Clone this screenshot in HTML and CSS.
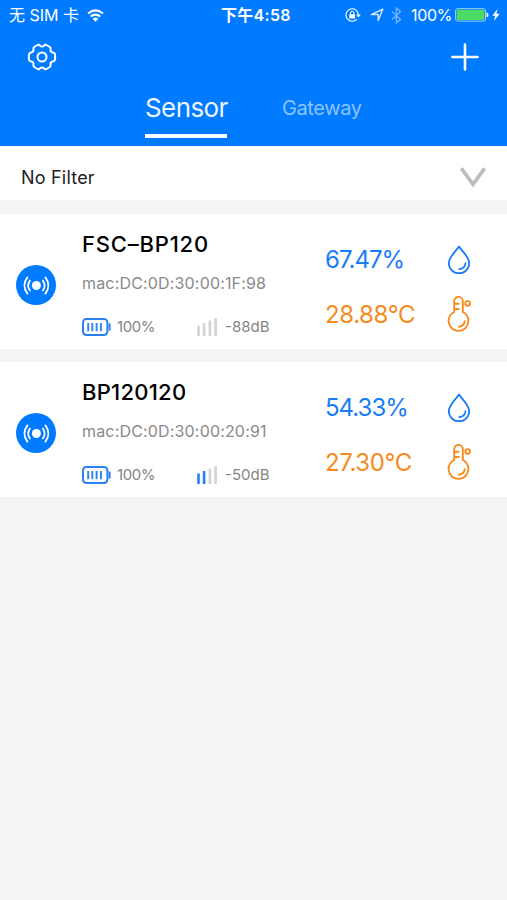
FILE: index.html
```html
<!DOCTYPE html>
<html lang="en">
<head>
<meta charset="utf-8">
<meta name="viewport" content="width=device-width, initial-scale=1">
<title>Sensor</title>
<link rel="stylesheet" href="styles.css">
</head>

<body>
<!-- shared icons -->
<svg class="sprite" width="0" height="0">
	<symbol id="beacon" viewBox="0 0 40 40">
		<circle cx="20" cy="20" r="20" fill="#007aff"/>
		<circle cx="20.4" cy="20.5" r="4.5" fill="#fff"/>
		<g fill="none" stroke="#fff" stroke-width="1.8" stroke-linecap="round">
			<path d="M13.9 15.4q-3.4 5.1 0 10.2M26.9 15.4q3.4 5.1 0 10.2"/>
			<path d="M11.4 12.4q-6 8.1 0 16.2M29.4 12.4q6 8.1 0 16.2"/>
		</g>
	</symbol>
	<symbol id="battery" viewBox="0 0 29 18">
		<rect x="1" y="1" width="24.4" height="16" rx="3.4" fill="none" stroke="#2a80f4" stroke-width="2"/>
		<path d="M27.6 5.5v7" stroke="#2a80f4" stroke-width="2"/>
		<path d="M6.2 5v8.2M10.3 5v8.2M14.6 5v8.2M18.9 5v8.2" stroke="#2a80f4" stroke-width="1.9"/>
	</symbol>
	<symbol id="drop" viewBox="0 0 24 30">
		<path d="M12 1.6C9 6 1.8 12 1.8 18.2a10.2 10 0 0 0 20.4 0C22.2 12 15 6 12 1.6z" fill="none" stroke="#1a7cf5" stroke-width="1.8" stroke-linejoin="round"/>
		<path d="M12.2 24.2q5.7-.4 6.3-6" fill="none" stroke="#1a7cf5" stroke-width="1.7" stroke-linecap="round"/>
	</symbol>
	<symbol id="thermo" viewBox="0 0 24 36">
		<g fill="none" stroke="#f78a1d" stroke-width="1.9" stroke-linecap="round">
			<path d="M7.2 16V5.2a4.3 4.3 0 0 1 8.6 0V16a9.9 9.9 0 1 1-8.6 0z" stroke="none"/>
			<path d="M7.2 16V5.2a4.3 4.3 0 0 1 8.6 0V16a9.9 9.9 0 1 1-8.6 0"/>
			<path d="M8 7.8h3.6M8 13h3.6M12 30.8q5-.6 5.8-5.6"/>
			<circle cx="20.6" cy="7.4" r="2.3"/>
		</g>
	</symbol>
</svg>

<header class="header">
	<div class="status">
		<div class="status-left">
			<span class="carrier">无 SIM 卡</span>
			<svg class="wifi" width="17" height="13" viewBox="0 0 17 13">
				<g fill="none" stroke="#fff" stroke-width="2">
					<path d="M1 4.6q7.5-6.4 15 0"/>
					<path d="M3.7 7.6q4.8-4 9.6 0"/>
				</g>
				<path d="M5.6 9.7q2.9-2.3 5.8 0l-2.9 3z" fill="#fff"/>
			</svg>
		</div>
		<div class="time">下午4:58</div>
		<div class="status-right">
			<svg width="16" height="14" viewBox="0 0 16 14">
				<path d="M13.4 7a6.2 6.2 0 1 0-1.7 4.3" fill="none" stroke="#fff" stroke-width="1.1"/>
				<path d="M11.2 6.4h4.6l-2.3 3z" fill="#fff"/>
				<rect x="4.3" y="6.3" width="5.8" height="4.2" rx=".5" fill="#fff"/>
				<path d="M5.5 6.4V5a1.7 1.7 0 0 1 3.4 0v1.4" fill="none" stroke="#fff" stroke-width="1"/>
			</svg>
			<svg class="locate" width="14" height="14" viewBox="0 0 14 14">
				<path d="M1.2 6.6L12.8 1.2 8.2 12.6V6.4z" fill="none" stroke="#d9ebff" stroke-width="1.4" stroke-linejoin="round"/>
			</svg>
			<svg class="bluetooth" width="11" height="17" viewBox="0 0 11 17">
				<path d="M1 4.6l8.6 7.8-4.2 3.6V1l4.2 3.6L1 12.4" fill="none" stroke="#6db3ff" stroke-width="1.4"/>
			</svg>
			<span class="percent">100%</span>
			<svg class="power" width="34" height="14" viewBox="0 0 34 14">
				<rect x=".6" y=".7" width="30" height="12.4" rx="2" fill="none" stroke="#9fd0ff" stroke-width="1"/>
				<rect x="1.7" y="1.8" width="27.8" height="10.2" rx="1" fill="#4cd964"/>
				<path d="M31.5 4.5q2 .3 2 2.4t-2 2.4z" fill="#fff"/>
			</svg>
			<svg class="bolt" width="8" height="12" viewBox="0 0 8 12">
				<path d="M5.4 0L.4 6.8h2.8L2 12l5.6-7.2H4.5z" fill="#fff"/>
			</svg>
		</div>
	</div>

	<div class="toolbar">
		<svg width="30" height="28" viewBox="0 0 30 28">
			<g fill="none" stroke="#fff" stroke-width="2" stroke-linejoin="round">
				<path d="M10.6 2Q12.1 1.3 13 2.6 15 4.6 17 2.6 17.9 1.3 19.4 2L22.8 4Q24 5 23.5 6.4 23.1 8.9 25.9 9.6 27.9 9.9 28.1 11.6V16.4Q27.9 18.1 25.9 18.4 23.1 19.1 23.5 21.6 24 23 22.8 24L19.4 26Q17.9 26.7 17 25.4 15 23.4 13 25.4 12.1 26.7 10.6 26L7.2 24Q6 23 6.5 21.6 6.9 19.1 4.1 18.4 2.1 18.1 1.9 16.4V11.6Q2.1 9.9 4.1 9.6 6.9 8.9 6.5 6.4 6 5 7.2 4z"/>
				<circle cx="15" cy="14" r="4.5"/>
			</g>
		</svg>
		<svg width="28" height="28" viewBox="0 0 28 28">
			<path d="M14 1.5v25M1.5 14h25" stroke="#fff" stroke-width="2.6" stroke-linecap="round"/>
		</svg>
	</div>

	<nav class="tabs">
		<a class="tab tab-on">Sensor</a>
		<a class="tab">Gateway</a>
	</nav>
</header>

<div class="filter">
	<span class="filter-text">No Filter</span>
	<svg width="28" height="22" viewBox="0 0 28 22">
		<path d="M2.4 2.4L14 18.4 25.6 2.4" fill="none" stroke="#bdbdbd" stroke-width="3.6"/>
	</svg>
</div>

<main class="list">
	<section class="card">
		<svg class="beacon" width="40" height="40"><use href="#beacon"/></svg>
		<div class="info">
			<h2 class="name name-wide">FSC–BP120</h2>
			<p class="mac">mac:DC:0D:30:00:1F:98</p>
			<div class="meta">
				<svg width="29" height="18"><use href="#battery"/></svg>
				<span class="level">100%</span>
				<svg class="signal" width="20" height="18" viewBox="0 0 20 18">
					<path class="off" d="M1.5 7.5V18M7.1 5V18M12.9 2.5V18M18.6 0V18"/>
				</svg>
				<span class="rssi">-88dB</span>
			</div>
		</div>
		<div class="values">
			<div class="value humidity">67.47%</div>
			<div class="value temp">28.88°C</div>
		</div>
		<div class="marks">
			<svg width="24" height="30"><use href="#drop"/></svg>
			<svg width="24" height="36"><use href="#thermo"/></svg>
		</div>
	</section>

	<section class="card">
		<svg class="beacon" width="40" height="40"><use href="#beacon"/></svg>
		<div class="info">
			<h2 class="name">BP120120</h2>
			<p class="mac">mac:DC:0D:30:00:20:91</p>
			<div class="meta">
				<svg width="29" height="18"><use href="#battery"/></svg>
				<span class="level">100%</span>
				<svg class="signal" width="20" height="18" viewBox="0 0 20 18">
					<path class="on" d="M1.5 7.5V18M7.1 5V18"/>
					<path class="off" d="M12.9 2.5V18M18.6 0V18"/>
				</svg>
				<span class="rssi">-50dB</span>
			</div>
		</div>
		<div class="values">
			<div class="value humidity">54.33%</div>
			<div class="value temp">27.30°C</div>
		</div>
		<div class="marks">
			<svg width="24" height="30"><use href="#drop"/></svg>
			<svg width="24" height="36"><use href="#thermo"/></svg>
		</div>
	</section>
</main>
</body>
</html>
```
FILE: styles.css
```css
*{margin:0;padding:0;box-sizing:border-box;}
body{background:#f4f4f4;font-family:Inter,"Noto Sans CJK SC",sans-serif;color:#222;}
svg{display:block;flex:none;}
.sprite{display:none;}

/* header */
.header{height:146px;background:#007aff;color:#fff;}
.status{display:flex;align-items:center;height:30px;padding-left:9px;font-size:16px;line-height:30px;white-space:nowrap;}
.status-left{display:flex;align-items:center;width:212px;}
.carrier{width:78px;}
.time{width:124px;font-weight:600;letter-spacing:.3px;}
.status-right{display:flex;align-items:center;}
.locate{margin-left:9px;}
.bluetooth{margin-left:7px;}
.percent{width:44px;margin-left:9px;letter-spacing:-.3px;}
.bolt{margin-left:3px;}
.toolbar{display:flex;justify-content:space-between;height:56px;padding:13px 28px 0 27px;}
.tabs{display:flex;padding-left:145px;}
.tab{width:82px;height:52px;font-size:20px;line-height:44px;letter-spacing:-.4px;color:#8cc4ff;white-space:nowrap;}
.tab-on{width:82px;margin-right:55px;border-bottom:4px solid #fff;font-size:26px;letter-spacing:-.6px;color:#e9f5ff;}

/* filter */
.filter{display:flex;align-items:center;justify-content:space-between;height:54px;padding:8px 20px 0 21px;background:#fff;}
.filter-text{font-size:18px;letter-spacing:.2px;}

/* sensor list */
.card{display:flex;height:135px;margin-top:13.5px;padding-left:16px;background:#fff;}
.beacon{margin-top:51px;}
.info{width:243px;margin-left:26px;padding-top:16px;}
.name{height:28px;font-size:22px;font-weight:500;line-height:28px;letter-spacing:.25px;color:#000;}
.name-wide{letter-spacing:.8px;}
.mac{height:22px;margin-top:14px;font-size:16px;line-height:22px;letter-spacing:.17px;color:#8a8a8a;white-space:nowrap;}
.meta{display:flex;align-items:center;height:22px;margin-top:22px;font-size:15px;line-height:22px;color:#858585;}
.level{width:80px;margin-left:6px;letter-spacing:-.4px;}
.rssi{margin-left:8px;}
.signal path{fill:none;stroke-width:2.6;}
.signal .off{stroke:#d3d3d3;}
.signal .on{stroke:#2a80f4;}
.values{width:122px;padding-top:31px;}
.value{height:30px;font-size:24px;line-height:30px;}
.humidity{letter-spacing:-1px;color:#1a7cf5;}
.temp{margin-top:25px;letter-spacing:-.4px;color:#f78a1d;}
.marks{display:flex;flex-direction:column;gap:21px;padding-top:31px;}
```
